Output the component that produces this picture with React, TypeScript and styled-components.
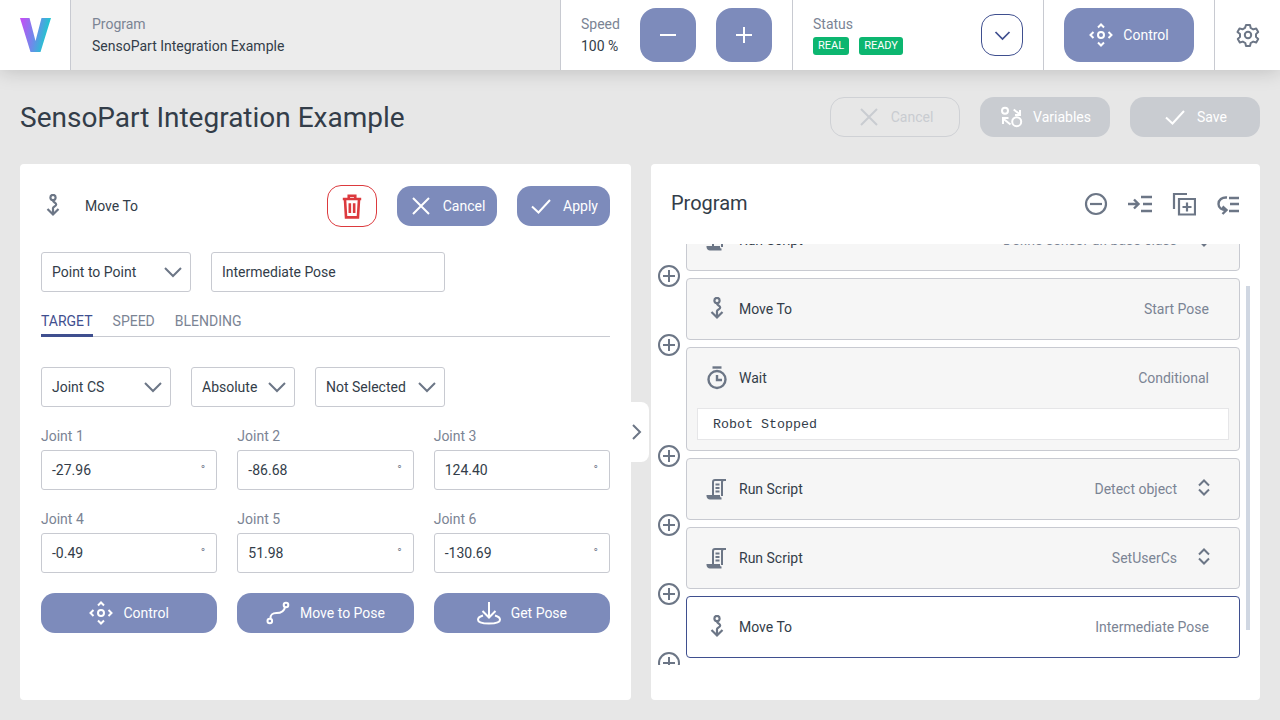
import React from "react";
import styled, { createGlobalStyle } from "styled-components";

const PRIMARY = "#3f4f8f";
const BUTTON = "#7d8bbb";
const BORDER = "#c8cad1";
const TEXT = "#333d49";
const MUTED = "#7b8494";
const ICON = "#6c7686";

const GlobalStyle = createGlobalStyle`
  html, body {
    margin: 0;
    padding: 0;
    height: 100%;
    overflow: hidden;
    background: #e7e7e7;
    font-family: Roboto, "Liberation Sans", sans-serif;
    font-size: 14px;
    color: ${TEXT};
  }
  * {
    box-sizing: border-box;
  }
`;

const Page = styled.div`
  width: 1280px;
  height: 720px;
  display: flex;
  flex-direction: column;
`;

const TopBar = styled.header`
  height: 70px;
  flex: none;
  display: flex;
  background: #fff;
  box-shadow: 0 0 20px rgba(0, 0, 0, 0.2);
  position: relative;
`;

const BarCell = styled.div<{ $width?: number; $grey?: boolean }>`
  width: ${({ $width }) => ($width ? `${$width}px` : "auto")};
  flex: ${({ $width }) => ($width ? "none" : "1")};
  display: flex;
  align-items: center;
  padding: 0 20px;
  border-right: 1px solid ${BORDER};
  background: ${({ $grey }) => ($grey ? "#ececec" : "#fff")};
  &:last-child {
    border-right: none;
    justify-content: center;
    padding: 0;
  }
`;

const LogoCell = styled(BarCell)`
  padding: 0 0 0 20px;
`;

const ProgramCell = styled(BarCell)`
  padding-left: 21px;
`;

const LabelStack = styled.div`
  display: flex;
  flex-direction: column;
  gap: 6px;
  line-height: 16px;
`;

const BarLabel = styled.div`
  color: ${MUTED};
`;

const BarValue = styled.div`
  color: ${TEXT};
`;

const SpeedButtons = styled.div`
  display: flex;
  gap: 20px;
  margin-left: 20px;
`;

const SquareButton = styled.button`
  width: 56px;
  height: 54px;
  border: none;
  border-radius: 16px;
  background: ${BUTTON};
  display: flex;
  align-items: center;
  justify-content: center;
  padding: 0;
`;

const StatusCol = styled.div`
  display: flex;
  flex-direction: column;
  gap: 5px;
  flex: 1;
  padding-top: 1px;
  line-height: 16px;
`;

const Badges = styled.div`
  display: flex;
  gap: 10px;
`;

const Badge = styled.span`
  height: 18px;
  line-height: 18px;
  padding: 0 5px;
  border-radius: 3px;
  background: #0cb670;
  color: #fff;
  font-size: 11px;
`;

const OutlineIconButton = styled.button<{ $color: string; $width: number }>`
  width: ${({ $width }) => $width}px;
  height: 42px;
  flex: none;
  padding: 0;
  border: 1px solid ${({ $color }) => $color};
  border-radius: 14px;
  background: #fff;
  display: flex;
  align-items: center;
  justify-content: center;
`;

const Button = styled.button<{ $width?: number; $height?: number; $tone?: "solid" | "muted" | "ghost" }>`
  width: ${({ $width }) => ($width ? `${$width}px` : "100%")};
  height: ${({ $height }) => $height ?? 40}px;
  flex: none;
  display: flex;
  align-items: center;
  justify-content: center;
  gap: 10px;
  padding: 0;
  border-radius: ${({ $height }) => ($height ? 16 : 14)}px;
  font: 400 14px Roboto, sans-serif;
  color: ${({ $tone }) => ($tone === "ghost" ? "#c9ccd1" : "#fff")};
  background: ${({ $tone }) =>
    $tone === "ghost" ? "transparent" : $tone === "muted" ? "#c9ccd1" : BUTTON};
  border: ${({ $tone }) => ($tone === "ghost" ? "1px solid #cfd1d5" : "none")};
`;

const Main = styled.main`
  flex: 1;
  display: flex;
  flex-direction: column;
  padding: 0 20px 20px;
  min-height: 0;
`;

const TitleRow = styled.div`
  height: 94px;
  flex: none;
  display: flex;
  align-items: center;
  gap: 20px;
`;

const PageTitle = styled.h1`
  flex: 1;
  margin: 0;
  font-size: 28px;
  font-weight: 400;
  color: ${TEXT};
`;

const Columns = styled.div`
  flex: 1;
  display: flex;
  gap: 20px;
  min-height: 0;
  position: relative;
`;

const Panel = styled.section<{ $width: number }>`
  width: ${({ $width }) => $width}px;
  background: #fff;
  border-radius: 4px;
  display: flex;
  flex-direction: column;
`;

const EditorPanel = styled(Panel)`
  padding: 21px 21px 0 21px;
`;

const EditorHead = styled.div`
  display: flex;
  align-items: center;
  height: 42px;
`;

const EditorTitle = styled.div`
  flex: 1;
  margin-left: 20px;
`;

const EditorActions = styled.div`
  display: flex;
  align-items: center;
  gap: 20px;
`;

const FormRow = styled.div<{ $top: number }>`
  display: flex;
  gap: 20px;
  margin-top: ${({ $top }) => $top}px;
`;

const Field = styled.div<{ $width?: number }>`
  width: ${({ $width }) => ($width ? `${$width}px` : "100%")};
  height: 40px;
  display: flex;
  align-items: center;
  justify-content: space-between;
  padding: 0 10px;
  border: 1px solid ${BORDER};
  border-radius: 3px;
  background: #fff;
  color: ${TEXT};
`;

const SelectField = styled(Field)`
  padding-right: 5px;
`;

const Degree = styled.span`
  font-size: 12px;
  color: ${MUTED};
  margin-right: 1px;
`;

const Tabs = styled.div`
  display: flex;
  gap: 20px;
  height: 33px;
  margin-top: 12px;
  border-bottom: 1px solid ${BORDER};
`;

const Tab = styled.div<{ $active?: boolean }>`
  height: 33px;
  padding-top: 8px;
  line-height: 18px;
  color: ${({ $active }) => ($active ? PRIMARY : MUTED)};
  border-bottom: ${({ $active }) => ($active ? `3px solid ${PRIMARY}` : "none")};
`;

const JointGrid = styled.div`
  display: grid;
  grid-template-columns: repeat(3, 1fr);
  column-gap: 20px;
  row-gap: 20px;
  margin-top: 20px;
`;

const JointBox = styled.div`
  display: flex;
  flex-direction: column;
  gap: 5px;
`;

const JointLabel = styled.label`
  line-height: 18px;
  height: 18px;
  color: ${MUTED};
`;

const CollapseTab = styled.div`
  position: absolute;
  left: 611px;
  top: 238px;
  width: 18px;
  height: 60px;
  background: #fff;
  border-radius: 0 8px 8px 0;
  display: flex;
  align-items: center;
`;

const ProgramHead = styled.div`
  height: 80px;
  flex: none;
  display: flex;
  align-items: center;
  padding: 0 20px;
`;

const ProgramTitle = styled.h2`
  flex: 1;
  margin: -2px 0 0;
  font-size: 20px;
  font-weight: 400;
  color: ${TEXT};
`;

const ProgramTools = styled.div`
  display: flex;
  gap: 20px;
`;

const ToolIcon = styled.div`
  width: 24px;
  height: 24px;
  display: flex;
`;

const ListViewport = styled.div`
  height: 421px;
  overflow: hidden;
  position: relative;
`;

const List = styled.div`
  display: flex;
  flex-direction: column;
  gap: 7px;
  margin-top: -35px;
  padding: 0 20px 0 7px;
`;

const ListItem = styled.div`
  display: flex;
  align-items: flex-end;
  gap: 6px;
`;

const AddButton = styled.div`
  width: 22px;
  height: 22px;
  flex: none;
  margin-bottom: -16px;
  display: flex;
`;

const Node = styled.div<{ $selected?: boolean }>`
  flex: 1;
  border: 1px solid ${({ $selected }) => ($selected ? PRIMARY : BORDER)};
  border-radius: 4px;
  background: ${({ $selected }) => ($selected ? "#fff" : "#f6f6f6")};
`;

const NodeHead = styled.div`
  height: 60px;
  display: flex;
  align-items: center;
  padding: 0 30px 0 18px;
`;

const NodeIcon = styled.div`
  width: 24px;
  height: 24px;
  flex: none;
  display: flex;
`;

const NodeName = styled.div`
  flex: 1;
  margin-left: 10px;
  color: ${TEXT};
`;

const NodeDetail = styled.div`
  color: ${MUTED};
`;

const Expander = styled.div`
  width: 16px;
  height: 20px;
  margin: 0 -3px 0 19px;
  display: flex;
`;

const Condition = styled.div`
  height: 32px;
  margin: 0 10px 10px;
  padding: 0 15px;
  display: flex;
  align-items: center;
  border: 1px solid #e6e6e8;
  background: #fff;
  font-family: "Liberation Mono", "DejaVu Sans Mono", monospace;
  font-size: 13.33px;
  color: ${TEXT};
`;

const Scrollbar = styled.div`
  position: absolute;
  right: 10px;
  top: 42px;
  width: 4px;
  height: 344px;
  background: #d0d7e2;
`;

const Svg = styled.svg`
  display: block;
  flex: none;
`;

type IconProps = { color?: string; size?: number };

const Line = ({
  size = 24,
  color = "#fff",
  weight = 2,
  children,
}: IconProps & { weight?: number; children: React.ReactNode }) => (
  <Svg width={size} height={size} viewBox="0 0 24 24" fill="none" stroke={color} strokeWidth={weight}>
    {children}
  </Svg>
);

const Logo = () => (
  <Svg width={31} height={35} viewBox="0 0 31 35">
    <defs>
      <linearGradient id="logoGrad" x1="0" y1="0" x2="1" y2="0.25">
        <stop offset="0" stopColor="#cb49f6" />
        <stop offset="0.55" stopColor="#6d8bea" />
        <stop offset="1" stopColor="#14d0cb" />
      </linearGradient>
    </defs>
    <path d="M0 0h9.500l6 23 6-23H31L20.500 34h-10z" fill="url(#logoGrad)" />
  </Svg>
);

const Minus = () => (
  <Line>
    <path d="M4 12h16" />
  </Line>
);
const Plus = () => (
  <Line>
    <path d="M4 12h16M12 4v16" />
  </Line>
);
const Chevron = ({ color = ICON, size = 24 }: IconProps) => (
  <Line size={size} color={color}>
    <path d="M4 8l8 8 8-8" />
  </Line>
);
const Cross = ({ color = "#fff" }: IconProps) => (
  <Line color={color}>
    <path d="M4 4l16 16M20 4L4 20" />
  </Line>
);
const Check = () => (
  <Line>
    <path d="M3 12.500l6.500 6L21 6" />
  </Line>
);
const ControlIcon = () => (
  <Line>
    <circle cx="12" cy="12" r="3" />
    <path d="M9 4.500L12 1.500l3 3M9 19.500l3 3 3-3M4.500 9l-3 3 3 3M19.500 9l3 3-3 3" />
  </Line>
);
const VariablesIcon = () => (
  <Line>
    <circle cx="6" cy="5.700" r="3" />
    <circle cx="17.700" cy="16.700" r="4.500" />
    <path d="M14.700 4.500L21 9.500M21 5v5h-5M11.500 19.500L4 13.500M4 19v-6h5.500" />
  </Line>
);
const Gear = () => (
  <Line color={ICON}>
    <path
      d="M10 2h4l.7 3 2.500 1.400 3-.9 2 3.500-2.200 2.100v2.800l2.200 2.100-2 3.500-3-.9-2.500 1.400-.7 3h-4l-.7-3-2.500-1.400-3 .9-2-3.500 2.200-2.100V11L1.500 8.900l2-3.500 3 .9L9 4.900z"
      strokeLinejoin="round"
    />
    <circle cx="12" cy="12" r="3.200" />
  </Line>
);
const Trash = () => (
  <Line color="#dc3a3e" size={26} weight={2.4}>
    <path d="M3.500 5.500h17M9 5.500V2.500h6v3M5.500 5.500l1 17h11l1-17M10 9.500v9M14 9.500v9" />
  </Line>
);
const MoveToIcon = () => (
  <Line color={ICON} weight={2.2}>
    <circle cx="12" cy="3.500" r="2.600" />
    <path d="M12 6.500c0 2 3.200 2 3.200 4s-3.200 1.800-3.200 3.500v6M6.500 15l5.500 5.500 5.500-5.500" />
  </Line>
);
const WaitIcon = () => (
  <Line color={ICON} weight={2.4}>
    <path d="M7.500 1.500h9" />
    <circle cx="12" cy="13.500" r="8.500" />
    <path d="M12 9v5h5" />
  </Line>
);
const ScriptIcon = () => (
  <Line color={ICON}>
    <path d="M8 19V5a2 2 0 0 1 2-2h11M17 19V5a2 2 0 0 1 2-2" />
    <path d="M10.500 7.500h4M10.500 11h4M10.500 14.500h4" />
    <path d="M2.500 19h11.500c0 1 1 2.500 2.500 2.500H5A2.500 2.500 0 0 1 2.500 19z" fill={ICON} />
  </Line>
);
const RouteIcon = () => (
  <Line>
    <circle cx="3.800" cy="20" r="2.300" />
    <circle cx="20" cy="4" r="2.300" />
    <path d="M4.500 17.500c0-4 1.500-5.500 6-5.500s7.500-1 8.500-5.800" />
  </Line>
);
const GetPoseIcon = () => (
  <Line>
    <path d="M12 1v15M5.500 10l6.500 6.500 6.500-6.500" />
    <path d="M6 14.500c-3 .8-5 2.300-5 4.200 0 2.600 5 3.800 11 3.800s11-1.200 11-3.800c0-1.900-2-3.400-5-4.200" />
  </Line>
);
const AddCircle = () => (
  <Svg width={22} height={22} viewBox="0 0 22 22" fill="none" stroke={ICON} strokeWidth={2}>
    <circle cx="11" cy="11" r="10" />
    <path d="M11 5v12M5 11h12" />
  </Svg>
);
const RemoveCircle = () => (
  <Line color={ICON} weight={2.2}>
    <circle cx="12" cy="12" r="10" />
    <path d="M6 12h12" />
  </Line>
);
const IndentIcon = () => (
  <Line color={ICON} weight={2.4}>
    <path d="M0 12h11M6 7.500l4.500 4.500L6 16.500M13 5h11M15 12h9M13 19h11" />
  </Line>
);
const CopyPlusIcon = () => (
  <Line color={ICON} weight={2.2}>
    <path d="M15 2H2v15" />
    <path d="M7 7h16v15.500H7zM15 10.500v9M10.500 15h9" />
  </Line>
);
const OutdentIcon = () => (
  <Line color={ICON} weight={2.4}>
    <path d="M13 6h10M14 12h9M13 19h10M11 5.500C6 5 2.500 8 2.500 12S6 18 10 18M6.500 14.500l4 3.500-4 4" />
  </Line>
);
const UpDown = () => (
  <Svg width={16} height={20} viewBox="0 0 16 20" fill="none" stroke={ICON} strokeWidth={2}>
    <path d="M3 6.500l5-5 5 5M3 10.500l5 5 5-5" />
  </Svg>
);
const ChevronRight = () => (
  <Svg width={12} height={18} viewBox="0 0 12 18" fill="none" stroke={ICON} strokeWidth={2}>
    <path d="M2 2l7 7-7 7" />
  </Svg>
);

const joints = [
  { label: "Joint 1", value: "-27.96" },
  { label: "Joint 2", value: "-86.68" },
  { label: "Joint 3", value: "124.40" },
  { label: "Joint 4", value: "-0.49" },
  { label: "Joint 5", value: "51.98" },
  { label: "Joint 6", value: "-130.69" },
];

type NodeData = {
  kind: "script" | "move" | "wait";
  name: string;
  detail: string;
  expandable?: boolean;
  condition?: string;
  selected?: boolean;
};

const nodes: NodeData[] = [
  { kind: "script", name: "Run Script", detail: "Define sensor ur. base class", expandable: true },
  { kind: "move", name: "Move To", detail: "Start Pose" },
  { kind: "wait", name: "Wait", detail: "Conditional", condition: "Robot Stopped" },
  { kind: "script", name: "Run Script", detail: "Detect object", expandable: true },
  { kind: "script", name: "Run Script", detail: "SetUserCs", expandable: true },
  { kind: "move", name: "Move To", detail: "Intermediate Pose", selected: true },
];

const nodeIcons = {
  script: <ScriptIcon />,
  move: <MoveToIcon />,
  wait: <WaitIcon />,
};

const App = () => (
  <Page>
    <GlobalStyle />
    <TopBar>
      <LogoCell $width={71}>
        <Logo />
      </LogoCell>
      <ProgramCell $width={490} $grey>
        <LabelStack>
          <BarLabel>Program</BarLabel>
          <BarValue>SensoPart Integration Example</BarValue>
        </LabelStack>
      </ProgramCell>
      <BarCell $width={232}>
        <LabelStack>
          <BarLabel>Speed</BarLabel>
          <BarValue>100 %</BarValue>
        </LabelStack>
        <SpeedButtons>
          <SquareButton>
            <Minus />
          </SquareButton>
          <SquareButton>
            <Plus />
          </SquareButton>
        </SpeedButtons>
      </BarCell>
      <BarCell $width={251}>
        <StatusCol>
          <BarLabel>Status</BarLabel>
          <Badges>
            <Badge>REAL</Badge>
            <Badge>READY</Badge>
          </Badges>
        </StatusCol>
        <OutlineIconButton $color={PRIMARY} $width={42}>
          <Chevron color={PRIMARY} size={21} />
        </OutlineIconButton>
      </BarCell>
      <BarCell $width={171}>
        <Button $width={130} $height={54}>
          <ControlIcon />
          Control
        </Button>
      </BarCell>
      <BarCell>
        <Gear />
      </BarCell>
    </TopBar>
    <Main>
      <TitleRow>
        <PageTitle>SensoPart Integration Example</PageTitle>
        <Button $width={130} $tone="ghost">
          <Cross color="#c9ccd1" />
          Cancel
        </Button>
        <Button $width={130} $tone="muted">
          <VariablesIcon />
          Variables
        </Button>
        <Button $width={130} $tone="muted">
          <Check />
          Save
        </Button>
      </TitleRow>
      <Columns>
        <EditorPanel $width={611}>
          <EditorHead>
            <MoveToIcon />
            <EditorTitle>Move To</EditorTitle>
            <EditorActions>
              <OutlineIconButton $color="#dc3a3e" $width={50}>
                <Trash />
              </OutlineIconButton>
              <Button $width={100}>
                <Cross />
                Cancel
              </Button>
              <Button $width={93}>
                <Check />
                Apply
              </Button>
            </EditorActions>
          </EditorHead>
          <FormRow $top={25}>
            <SelectField $width={150}>
              Point to Point
              <Chevron />
            </SelectField>
            <Field $width={234}>Intermediate Pose</Field>
          </FormRow>
          <Tabs>
            <Tab $active>TARGET</Tab>
            <Tab>SPEED</Tab>
            <Tab>BLENDING</Tab>
          </Tabs>
          <FormRow $top={30}>
            <SelectField $width={130}>
              Joint CS
              <Chevron />
            </SelectField>
            <SelectField $width={104}>
              Absolute
              <Chevron />
            </SelectField>
            <SelectField $width={130}>
              Not Selected
              <Chevron />
            </SelectField>
          </FormRow>
          <JointGrid>
            {joints.map(({ label, value }) => (
              <JointBox key={label}>
                <JointLabel>{label}</JointLabel>
                <Field>
                  {value}
                  <Degree>°</Degree>
                </Field>
              </JointBox>
            ))}
          </JointGrid>
          <JointGrid>
            <Button>
              <ControlIcon />
              Control
            </Button>
            <Button>
              <RouteIcon />
              Move to Pose
            </Button>
            <Button>
              <GetPoseIcon />
              Get Pose
            </Button>
          </JointGrid>
        </EditorPanel>
        <CollapseTab>
          <ChevronRight />
        </CollapseTab>
        <Panel $width={609}>
          <ProgramHead>
            <ProgramTitle>Program</ProgramTitle>
            <ProgramTools>
              <ToolIcon>
                <RemoveCircle />
              </ToolIcon>
              <ToolIcon>
                <IndentIcon />
              </ToolIcon>
              <ToolIcon>
                <CopyPlusIcon />
              </ToolIcon>
              <ToolIcon>
                <OutdentIcon />
              </ToolIcon>
            </ProgramTools>
          </ProgramHead>
          <ListViewport>
            <List>
              {nodes.map((node, index) => (
                <ListItem key={index}>
                  <AddButton>
                    <AddCircle />
                  </AddButton>
                  <Node $selected={node.selected}>
                    <NodeHead>
                      <NodeIcon>{nodeIcons[node.kind]}</NodeIcon>
                      <NodeName>{node.name}</NodeName>
                      <NodeDetail>{node.detail}</NodeDetail>
                      {node.expandable && (
                        <Expander>
                          <UpDown />
                        </Expander>
                      )}
                    </NodeHead>
                    {node.condition && <Condition>{node.condition}</Condition>}
                  </Node>
                </ListItem>
              ))}
            </List>
            <Scrollbar />
          </ListViewport>
        </Panel>
      </Columns>
    </Main>
  </Page>
);

export default App;
